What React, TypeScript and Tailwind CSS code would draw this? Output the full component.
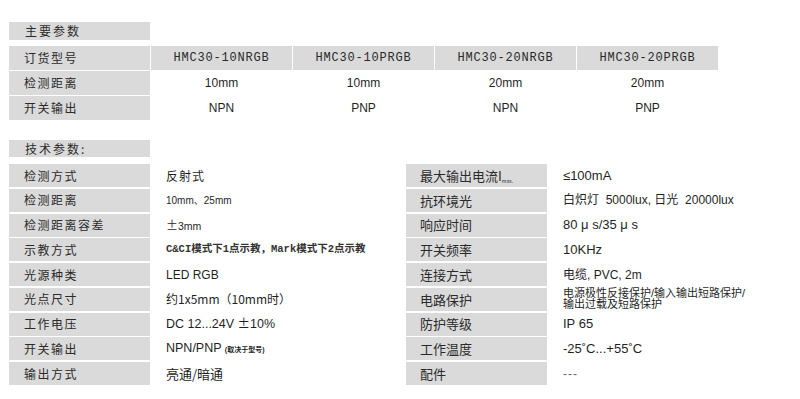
const cjk = "font-['Noto_Sans_CJK_SC',sans-serif]";
const arial = "font-['Liberation_Sans','Noto_Sans_CJK_SC',sans-serif]";
const mono = "font-['Liberation_Mono','Noto_Sans_CJK_SC',monospace]";

const models = ["HMC30-10NRGB", "HMC30-10PRGB", "HMC30-20NRGB", "HMC30-20PRGB"];

const mainRows = [
  { label: "检测距离", values: ["10mm", "10mm", "20mm", "20mm"] },
  { label: "开关输出", values: ["NPN", "PNP", "NPN", "PNP"] },
];

type Cell = React.ReactNode;

const techRows: { l: string; lv: Cell; r: Cell; rv: Cell }[] = [
  {
    l: "检测方式",
    lv: <span className={`${cjk} text-[12px] tracking-[1px]`}>反射式</span>,
    r: (
      <span>
        最大输出电流I<span className="text-[5px] align-[-2px]">max.</span>
      </span>
    ),
    rv: <span className={`${arial} text-[13px]`}>≤100mA</span>,
  },
  {
    l: "检测距离",
    lv: <span className={`${arial} text-[10px]`}>10mm、25mm</span>,
    r: "抗环境光",
    rv: <span className={`${arial} text-[12px] whitespace-pre`}>白炽灯  5000lux, 日光  20000lux</span>,
  },
  {
    l: "检测距离容差",
    lv: (
      <span className={`${arial} text-[10.5px]`}>
        <span className={`${cjk} text-[12px]`}>±</span>3mm
      </span>
    ),
    r: "响应时间",
    rv: <span className={`${arial} text-[13px]`}>80 μ s/35 μ s</span>,
  },
  {
    l: "示教方式",
    lv: <span className={`${mono} text-[10.5px] font-semibold text-[#333]`}>C&amp;CI模式下1点示教，Mark模式下2点示教</span>,
    r: "开关频率",
    rv: <span className={`${arial} text-[13px]`}>10KHz</span>,
  },
  {
    l: "光源种类",
    lv: <span className={`${arial} text-[12px]`}>LED RGB</span>,
    r: "连接方式",
    rv: <span className={`${arial} text-[12px]`}>电缆, PVC, 2m</span>,
  },
  {
    l: "光点尺寸",
    lv: <span className={`${cjk} text-[12px]`}>约1x5mm（10mm时）</span>,
    r: "电路保护",
    rv: (
      <span className={`${arial} text-[11px] leading-[11px] block`}>
        电源极性反接保护/输入输出短路保护/
        <br />
        输出过载及短路保护
      </span>
    ),
  },
  {
    l: "工作电压",
    lv: (
      <span className={`${arial} text-[12.5px]`}>
        DC 12...24V <span className={cjk}>±</span>10%
      </span>
    ),
    r: "防护等级",
    rv: <span className={`${arial} text-[13px]`}>IP 65</span>,
  },
  {
    l: "开关输出",
    lv: (
      <span className={`${arial} text-[12.5px]`}>
        NPN/PNP <span className="text-[7px] font-bold">(取决于型号)</span>
      </span>
    ),
    r: "工作温度",
    rv: <span className={`${arial} text-[13px]`}>-25˚C...+55˚C</span>,
  },
  {
    l: "输出方式",
    lv: <span className={`${cjk} text-[13px]`}>亮通/暗通</span>,
    r: "配件",
    rv: <span className={`${arial} text-[12px] text-[#666] tracking-[1px]`}>---</span>,
  },
];

export default function App() {
  return (
    <div className="w-[800px] h-[399px] bg-white text-[#1f1f1f] overflow-hidden pl-[9px] pt-[22px]">
      {/* 主要参数 */}
      <div className={`w-[141px] h-[18px] bg-[#dadada] pl-4 flex items-center ${cjk} text-[12px] tracking-[2px] text-[#2a2a2a]`}>
        主要参数
      </div>

      <div className="mt-[6px] grid grid-cols-[141px_141px_141px_141px_141px] gap-x-px gap-y-px">
        <div className={`h-6 bg-[#dadada] pl-[15px] flex items-center ${cjk} text-[12px] tracking-[1.5px] text-[#2a2a2a]`}>
          订货型号
        </div>
        {models.map((m) => (
          <div key={m} className={`h-6 bg-[#dadada] flex items-center justify-center ${mono} text-[12px] tracking-[0.8px] text-[#2a2a2a]`}>
            {m}
          </div>
        ))}
        {mainRows.map((row) => (
          <div key={row.label} className="contents">
            <div className={`h-6 bg-[#dadada] pl-[15px] flex items-center ${cjk} text-[12px] tracking-[1.5px] text-[#2a2a2a]`}>
              {row.label}
            </div>
            {row.values.map((v, i) => (
              <div key={i} className={`h-6 flex items-center justify-center ${arial} text-[12px]`}>
                {v}
              </div>
            ))}
          </div>
        ))}
      </div>

      {/* 技术参数 */}
      <div className={`mt-5 w-[141px] h-[17px] bg-[#dadada] pl-4 flex items-center ${cjk} text-[12px] tracking-[2px] text-[#2a2a2a]`}>
        技术参数:
      </div>

      <div className="mt-[7px] grid grid-cols-[141px_256px_141px_1fr] gap-y-[1.75px]">
        {techRows.map((row) => (
          <div key={row.l} className="contents">
            <div className={`h-[23px] bg-[#dadada] pl-[15px] flex items-center ${cjk} text-[12px] tracking-[1.5px] text-[#2a2a2a]`}>
              {row.l}
            </div>
            <div className="h-[23px] pl-4 flex items-center whitespace-nowrap">{row.lv}</div>
            <div className={`h-[23px] bg-[#dadada] pl-[14px] flex items-center ${cjk} text-[13px] text-[#2a2a2a] whitespace-nowrap`}>
              {row.r}
            </div>
            <div className="h-[23px] pl-4 flex items-center whitespace-nowrap">{row.rv}</div>
          </div>
        ))}
      </div>
    </div>
  );
}
